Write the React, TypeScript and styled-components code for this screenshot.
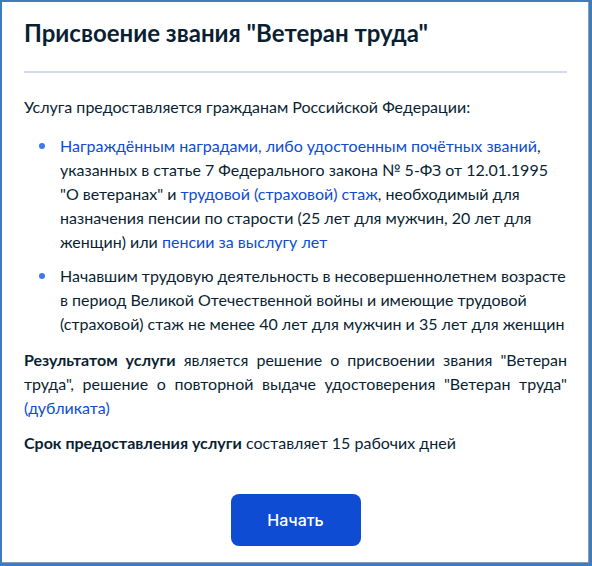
import styled, { createGlobalStyle } from "styled-components";

const GlobalStyle = createGlobalStyle`
    html, body {
        margin: 0;
        padding: 0;
        background: #ffffff;
    }
    * {
        box-sizing: border-box;
    }
`;

const App = () => {
    return (
        <>
            <GlobalStyle />
            <Frame>
                <Title>Присвоение звания "Ветеран труда"</Title>
                <Divider />
                <Text>Услуга предоставляется гражданам Российской Федерации:</Text>
                <List>
                    <Item>
                        <Link>Награждённым наградами, либо удостоенным почётных званий</Link>,
                        указанных в статье 7 Федерального закона № 5-ФЗ от 12.01.1995 "О
                        ветеранах" и <Link>трудовой (страховой) стаж</Link>, необходимый для
                        назначения пенсии по старости (25 лет для мужчин, 20 лет для женщин) или{" "}
                        <Link>пенсии за выслугу лет</Link>
                    </Item>
                    <Item>
                        Начавшим трудовую деятельность в несовершеннолетнем возрасте в период
                        Великой Отечественной войны и имеющие трудовой (страховой) стаж не менее
                        40 лет для мужчин и 35 лет для женщин
                    </Item>
                </List>
                <Text $justify>
                    <b>Результатом услуги</b> является решение о присвоении звания "Ветеран
                    труда", решение о повторной выдаче удостоверения "Ветеран труда"{" "}
                    <Link>(дубликата)</Link>
                </Text>
                <Text>
                    <b>Срок предоставления услуги</b> составляет 15 рабочих дней
                </Text>
                <Actions>
                    <StartButton>Начать</StartButton>
                </Actions>
            </Frame>
        </>
    );
};

export default App;

const Frame = styled.div`
    width: 592px;
    height: 566px;
    border-style: solid;
    border-color: #3f7bbf;
    border-width: 2px 3px 3px 2px;
    box-shadow: inset -1px -1px 0 #8a9bb0;
    padding: 15px 22px 0 22px;
    display: flex;
    flex-direction: column;
    font-family: Lato, "Noto Sans", sans-serif;
    color: #0b1f33;
`;

const Title = styled.h1`
    margin: 0;
    font-size: 24px;
    line-height: 32px;
    font-weight: 700;
`;

const Divider = styled.hr`
    margin: 22px 0 0 0;
    border: none;
    height: 2px;
    background: #d4dcec;
`;

const Text = styled.p<{ $justify?: boolean }>`
    margin: 22px 0 0 0;
    font-size: 16px;
    line-height: 24px;
    text-align: ${(p) => (p.$justify ? "justify" : "left")};

    & + & {
        margin-top: 11px;
    }

    b {
        font-weight: 700;
    }
`;

const List = styled.ul`
    margin: 15px 0 0 0;
    padding: 0 0 0 36px;
    list-style: none;
    display: flex;
    flex-direction: column;
    gap: 10px;
    & + p {
        margin-top: 12px;
    }
`;

const Item = styled.li`
    position: relative;
    font-size: 16px;
    line-height: 24px;

    &::before {
        content: "";
        position: absolute;
        left: -21px;
        top: 9px;
        width: 6px;
        height: 6px;
        border-radius: 50%;
        background: #3f78f0;
    }
`;

const Link = styled.span`
    color: #0d4cd3;
    cursor: pointer;
`;

const Actions = styled.div`
    display: flex;
    justify-content: center;
    margin-top: 39px;
`;

const StartButton = styled.button`
    width: 130px;
    height: 52px;
    border: none;
    border-radius: 8px;
    background: #0d4cd3;
    color: #ffffff;
    font-family: Inter, "Noto Sans", sans-serif;
    font-size: 16px;
    font-weight: 500;
    cursor: pointer;
`;
